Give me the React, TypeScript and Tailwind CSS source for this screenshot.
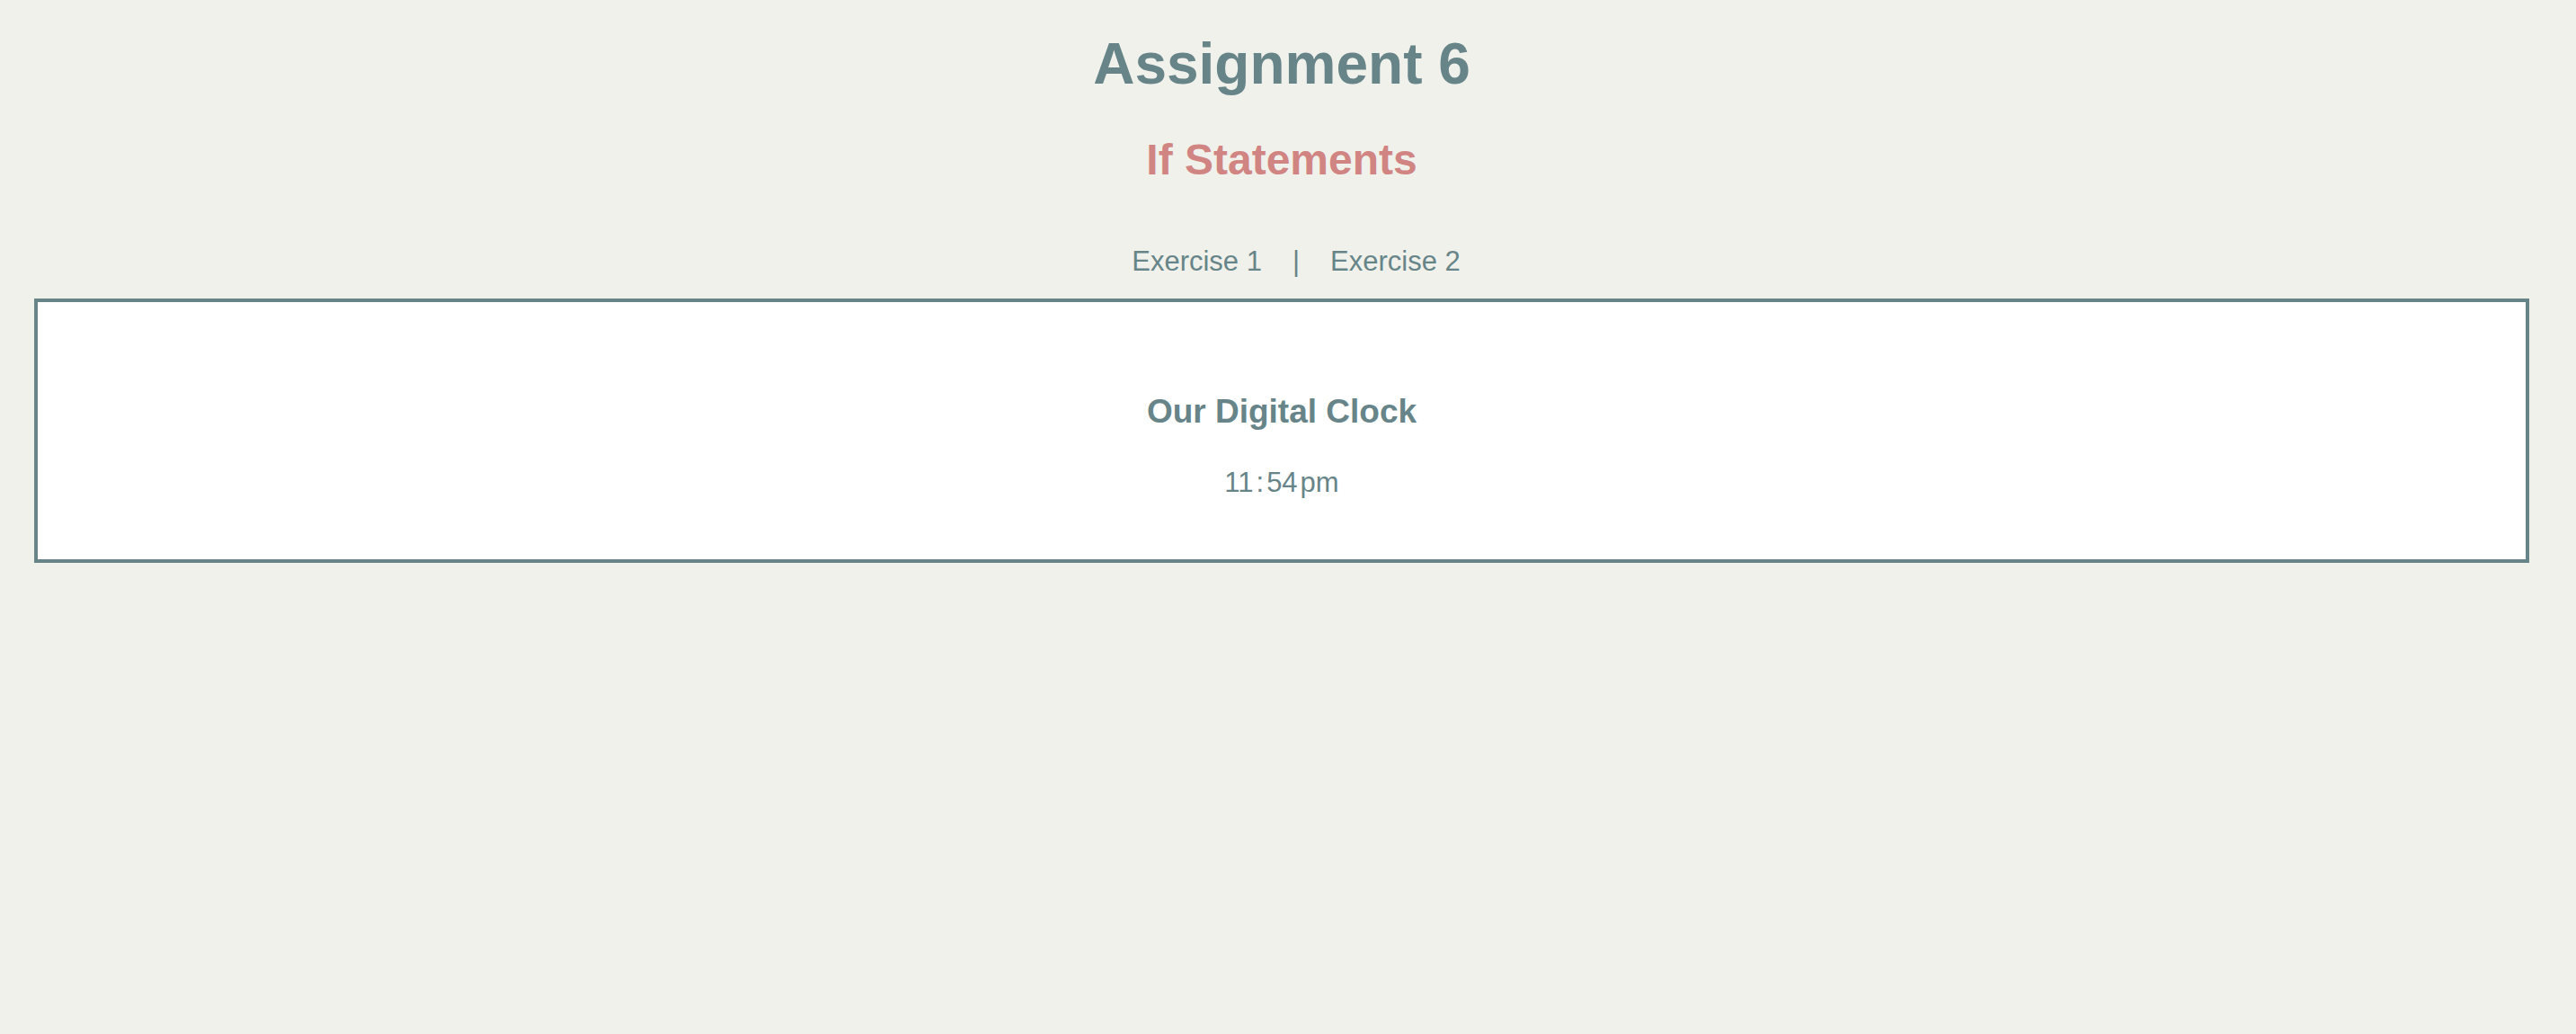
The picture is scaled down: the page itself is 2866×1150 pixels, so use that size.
const teal = "text-[#678589]";

const NavLink = ({ label }: { label: string }) => {
  return <a className={`${teal} cursor-pointer`}>{label}</a>;
};

export default function App() {
  return (
    <div className="min-h-[1150px] w-full bg-[#f1f1ec] font-['Liberation_Sans',Arial,sans-serif]">
      <div className="ml-[38px] w-[2776px]">
        <div className="text-center">
          <h1 className="pt-[34px] text-[64px] leading-[75px] font-bold text-[#678589]">
            Assignment 6
          </h1>
          <h2 className="mt-[41px] text-[48px] leading-[56px] font-bold text-[#d08583]">
            If Statements
          </h2>
        </div>

        <nav className="mt-[67px] flex justify-center gap-[34px] pl-[32px] text-[31px] leading-[36px]">
          <NavLink label="Exercise 1" />
          <span className={teal}>|</span>
          <NavLink label="Exercise 2" />
        </nav>

        <div className="mt-[23px] h-[294px] w-full border-4 border-[#678589] bg-white pt-[100px] text-center">
          <h3 className="text-[37px] leading-[44px] font-bold text-[#678589]">
            Our Digital Clock
          </h3>
          <div className="mt-[39px] flex justify-center gap-[3px] text-[31px] leading-[36px] text-[#678589]">
            <span>11</span>
            <span>:</span>
            <span>54</span>
            <span>pm</span>
          </div>
        </div>
      </div>
    </div>
  );
}
